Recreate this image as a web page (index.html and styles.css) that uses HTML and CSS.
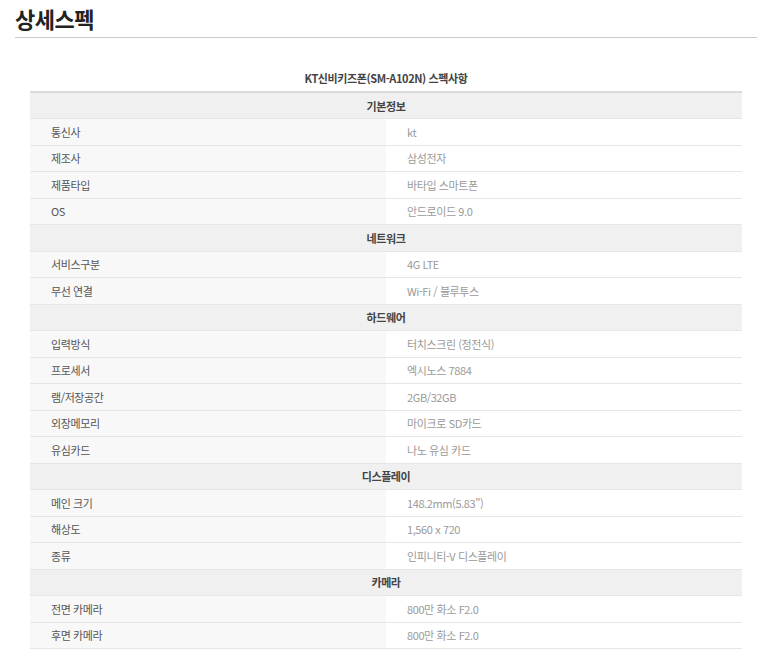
FILE: index.html
```html
<!DOCTYPE html>
<html lang="ko">
<head>
<meta charset="utf-8">
<title>상세스펙</title>
<link rel="stylesheet" href="styles.css">
</head>
<body>
<div class="page">
  <h2 class="title">상세스펙</h2>
  <div class="spec">
    <div class="caption">KT신비키즈폰(SM-A102N) 스펙사항</div>
    <table class="spec-table">
      <tr class="group"><th colspan="2">기본정보</th></tr>
      <tr><td class="label">통신사</td><td class="value">kt</td></tr>
      <tr><td class="label">제조사</td><td class="value">삼성전자</td></tr>
      <tr><td class="label">제품타입</td><td class="value">바타입 스마트폰</td></tr>
      <tr><td class="label">OS</td><td class="value">안드로이드 9.0</td></tr>
      <tr class="group"><th colspan="2">네트워크</th></tr>
      <tr><td class="label">서비스구분</td><td class="value">4G LTE</td></tr>
      <tr><td class="label">무선 연결</td><td class="value">Wi-Fi / 블루투스</td></tr>
      <tr class="group"><th colspan="2">하드웨어</th></tr>
      <tr><td class="label">입력방식</td><td class="value">터치스크린 (정전식)</td></tr>
      <tr><td class="label">프로세서</td><td class="value">엑시노스 7884</td></tr>
      <tr><td class="label">램/저장공간</td><td class="value">2GB/32GB</td></tr>
      <tr><td class="label">외장메모리</td><td class="value">마이크로 SD카드</td></tr>
      <tr><td class="label">유심카드</td><td class="value">나노 유심 카드</td></tr>
      <tr class="group"><th colspan="2">디스플레이</th></tr>
      <tr><td class="label">메인 크기</td><td class="value">148.2mm(5.83")</td></tr>
      <tr><td class="label">해상도</td><td class="value">1,560 x 720</td></tr>
      <tr><td class="label">종류</td><td class="value">인피니티-V 디스플레이</td></tr>
      <tr class="group"><th colspan="2">카메라</th></tr>
      <tr><td class="label">전면 카메라</td><td class="value">800만 화소 F2.0</td></tr>
      <tr><td class="label">후면 카메라</td><td class="value">800만 화소 F2.0</td></tr>
    </table>
  </div>
</div>
</body>
</html>
```

FILE: styles.css
```css
html, body {
  margin: 0;
  padding: 0;
  background: #fff;
}
body {
  font-family: "Noto Sans CJK KR", "Noto Sans", sans-serif;
  color: #333;
}
.page {
  padding: 0 16px 0 15px;
}
.title {
  margin: 0;
  padding-top: 4px;
  height: 33px;
  line-height: 28px;
  font-size: 22px;
  font-weight: 700;
  color: #222;
  letter-spacing: -0.5px;
  border-bottom: 1px solid #c8c8c8;
}
.spec {
  margin: 0 15px;
  padding-top: 29px;
}
.caption {
  text-align: center;
  font-size: 11px;
  font-weight: 700;
  color: #444;
  height: 24px;
  line-height: 22px;
  letter-spacing: -0.4px;
}
.spec-table {
  width: 100%;
  border-collapse: collapse;
  border-top: 2px solid #dadada;
  table-layout: fixed;
}
.spec-table tr {
  height: 26.5px;
}
.spec-table th,
.spec-table td {
  border-bottom: 1px solid #e6e6e6;
  padding: 0;
  font-size: 11px;
  line-height: 16px;
  letter-spacing: -0.4px;
}
.group th {
  background: #f0f0f0;
  font-weight: 700;
  color: #444;
  text-align: center;
}
.label {
  width: 50%;
  background: #f8f8f8;
  color: #555;
  padding-left: 21px !important;
}
.value {
  background: #fff;
  color: #9a9a9a;
  padding-left: 21px !important;
}
```
